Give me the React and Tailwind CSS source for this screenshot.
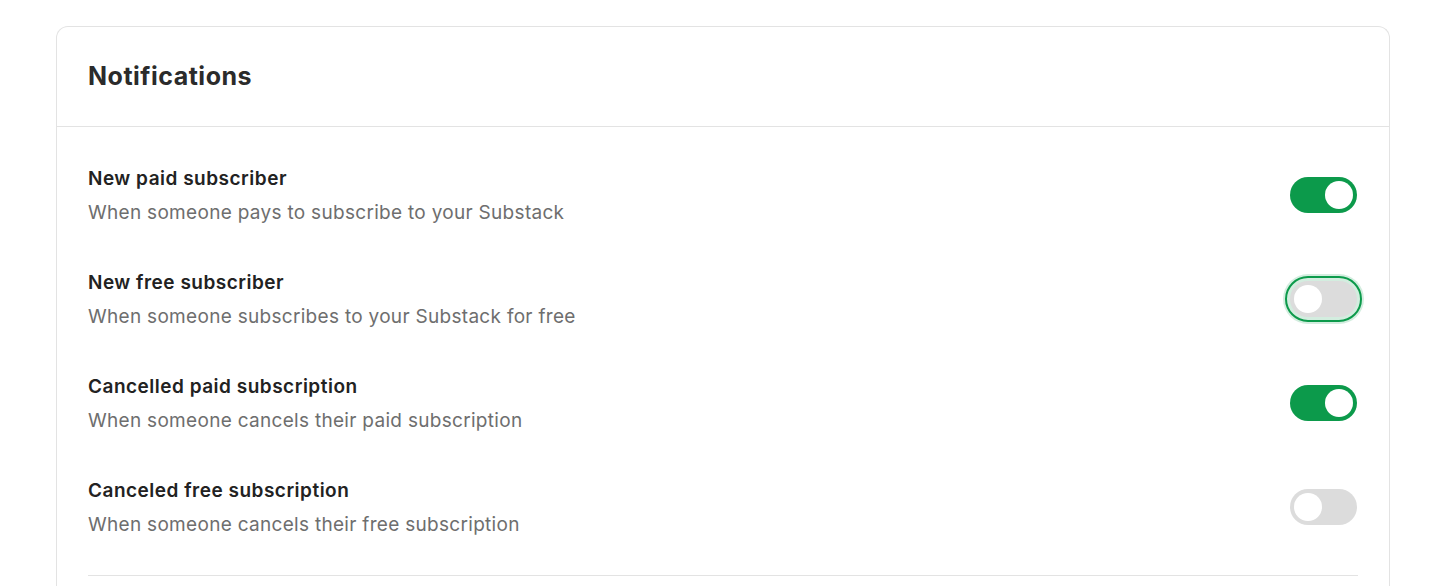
import { useState } from "react";

const items = [
  {
    title: "New paid subscriber",
    description: "When someone pays to subscribe to your Substack",
    on: true,
  },
  {
    title: "New free subscriber",
    description: "When someone subscribes to your Substack for free",
    on: false,
    focused: true,
  },
  {
    title: "Cancelled paid subscription",
    description: "When someone cancels their paid subscription",
    on: true,
  },
  {
    title: "Canceled free subscription",
    description: "When someone cancels their free subscription",
    on: false,
  },
];

function Toggle({ checked, focused, onChange }) {
  return (
    <button
      type="button"
      role="switch"
      aria-checked={checked}
      onClick={onChange}
      className={
        "relative mb-[5px] h-[36px] w-[67px] shrink-0 rounded-full transition-colors " +
        (checked ? "bg-[#0c9a4b]" : "bg-[#dcdcdc]") +
        (focused
          ? " outline-2 outline-offset-[3px] outline-[#0c9a4b] shadow-[0_0_0_7px_rgba(12,154,75,0.18)]"
          : "")
      }
    >
      <span
        className={
          "absolute top-[4px] h-[28px] w-[28px] rounded-full bg-white transition-all " +
          (checked ? "left-[35px]" : "left-[4px]")
        }
      />
    </button>
  );
}

export default function App() {
  const [values, setValues] = useState(items.map((item) => item.on));

  return (
    <div className="min-h-[586px] bg-white px-[56px] pt-[26px] font-['Inter',sans-serif] text-[#222]">
      <div className="w-[1334px] rounded-t-[12px] border border-b-0 border-[#e3e3e3]">
        <div className="flex h-[100px] items-center border-b border-[#e3e3e3] px-[31px]">
          <h2 className="text-[25px] font-bold tracking-[0.5px] text-[#2b2b2b]">
            Notifications
          </h2>
        </div>
        <div className="px-[31px] pt-[18px]">
          {items.map((item, index) => (
            <div
              key={item.title}
              className="flex items-center justify-between py-[19px] pr-[1px]"
            >
              <div className="flex flex-col">
                <span className="text-[19px] font-semibold leading-[30px] tracking-[0.5px] text-[#222]">
                  {item.title}
                </span>
                <span className="mt-[2px] text-[19px] leading-[34px] tracking-[0.3px] text-[#6e6e6e]">
                  {item.description}
                </span>
              </div>
              <Toggle
                checked={values[index]}
                focused={item.focused}
                onChange={() =>
                  setValues((current) =>
                    current.map((value, i) => (i === index ? !value : value))
                  )
                }
              />
            </div>
          ))}
          <div className="mt-[14px] border-t border-[#e3e3e3] pb-[10px]" />
        </div>
      </div>
    </div>
  );
}
